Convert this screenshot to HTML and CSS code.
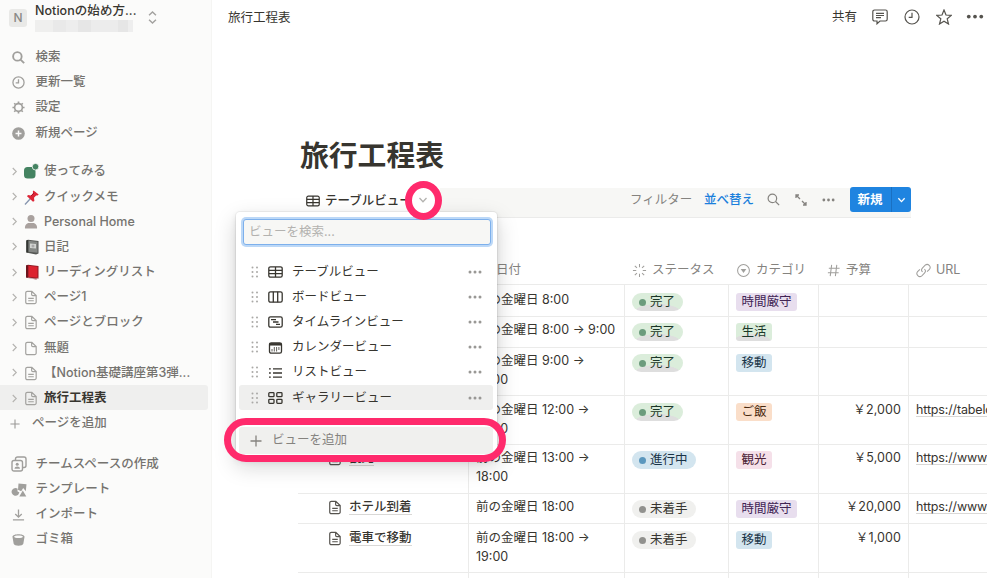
FILE: index.html
```html
<!DOCTYPE html>
<html lang="ja">
<head>
<meta charset="utf-8">
<title>旅行工程表</title>
<link rel="stylesheet" href="styles.css">
</head>
<body>
<svg class="defs" aria-hidden="true">
  <symbol id="chev" viewBox="0 0 8 10"><path d="M2 1l4 4-4 4"/></symbol>
  <symbol id="down" viewBox="0 0 10 8"><path d="M1.5 2L5 5.800L8.500 2"/></symbol>
  <symbol id="page" viewBox="0 0 13 15"><path d="M2.600.8h4.800l4.700 4.600v7a1.700 1.700 0 0 1-1.700 1.800H2.600A1.700 1.700 0 0 1 .8 12.400V2.500A1.700 1.700 0 0 1 2.600.8zM7.200 1v3.200a1.300 1.300 0 0 0 1.300 1.300H12M3.500 8.500h6M3.500 11h6"/></symbol>
  <symbol id="blank" viewBox="0 0 13 15"><path d="M2.600.8h4.800l4.700 4.600v7a1.700 1.700 0 0 1-1.700 1.800H2.600A1.700 1.700 0 0 1 .8 12.400V2.500A1.700 1.700 0 0 1 2.600.8zM7.200 1v3.200a1.300 1.300 0 0 0 1.300 1.300H12"/></symbol>
  <symbol id="search" viewBox="0 0 14 14"><circle cx="5.800" cy="5.800" r="4.600"/><path d="M9.200 9.200l3.900 3.900"/></symbol>
  <symbol id="clock" viewBox="0 0 14 14"><circle cx="7" cy="7" r="6"/><path d="M7 3.500V7.500H4"/></symbol>
  <symbol id="plus" viewBox="0 0 12 12"><path d="M6 .5v11M.5 6h11"/></symbol>
  <symbol id="dots" viewBox="0 0 14 4"><circle cx="2" cy="2" r="1.500"/><circle cx="7" cy="2" r="1.500"/><circle cx="12" cy="2" r="1.500"/></symbol>
  <symbol id="grip" viewBox="0 0 8 12"><circle cx="1.500" cy="1.500" r="1"/><circle cx="6" cy="1.500" r="1"/><circle cx="1.500" cy="6" r="1"/><circle cx="6" cy="6" r="1"/><circle cx="1.500" cy="10.500" r="1"/><circle cx="6" cy="10.500" r="1"/></symbol>
  <symbol id="table" viewBox="0 0 15 12"><path d="M2.500.8h10a1.700 1.700 0 0 1 1.700 1.700v7a1.700 1.700 0 0 1-1.700 1.700h-10A1.700 1.700 0 0 1 .8 9.500v-7A1.700 1.700 0 0 1 2.500.8zM.8 4.300h13.400M.8 7.700h13.400M7.500.8v10.400"/></symbol>
</svg>
<div class="app">
  <aside class="sidebar">
    <header class="space">
      <span class="avatar">N</span>
      <div class="space-name"><b>Notionの始め方...</b><i class="redacted"></i></div>
      <svg class="updown" viewBox="0 0 8 12"><path d="M.8 4L4 1l3.200 3M.8 8L4 11l3.200-3"/></svg>
    </header>
    <nav class="group main-nav">
      <a class="row"><svg class="ic bold"><use href="#search"/></svg>検索</a>
      <a class="row"><svg class="ic"><use href="#clock"/></svg>更新一覧</a>
      <a class="row"><svg class="ic" viewBox="0 0 14 14"><circle cx="7" cy="7" r="4.200" stroke-width="1.800"/><path stroke-width="1.800" d="M7 .5v2M7 11.500v2M.5 7h2M11.500 7h2M2.400 2.400l1.400 1.400M10.200 10.200l1.400 1.400M2.400 11.600l1.400-1.400M10.200 3.800l1.400-1.400"/></svg>設定</a>
      <a class="row"><svg class="ic" viewBox="0 0 14 14"><circle class="fill" cx="7" cy="7" r="6.800"/><path stroke="#fbfbfa" stroke-width="1.600" d="M7 3.800v6.400M3.800 7h6.400"/></svg>新規ページ</a>
    </nav>
    <nav class="group pages">
      <a class="row"><svg class="chev"><use href="#chev"/></svg><svg class="emo" viewBox="0 0 16 16"><rect x="1" y="4" width="11.500" height="11.500" rx="3.500" fill="#448361"/><circle cx="12.500" cy="3.700" r="3.300" fill="#448361" stroke="#fbfbfa" stroke-width=".8"/></svg>使ってみる</a>
      <a class="row"><svg class="chev"><use href="#chev"/></svg><svg class="emo" viewBox="0 0 16 16"><path d="M7.500 9.500L2 15.500" stroke="#8695ae" stroke-width="1.300"/><path d="M10.500 1.500l5.200 4-1.200 1-1.400-.1-2.100 2.300.4 3.300-1.400.7-6-5.400 1-1.400 3.100.5 2-2.300-.3-1.600z" fill="#dd2637"/><path d="M8 7l3-3" stroke="#a60f25" stroke-width="1"/></svg>クイックメモ</a>
      <a class="row"><svg class="chev"><use href="#chev"/></svg><svg class="emo" viewBox="0 0 16 16"><circle cx="8" cy="4.500" r="3.500" fill="#a9a19e"/><path d="M2 14.500c-.5-3 1.500-5.500 4-5.500h4c2.500 0 4.500 2.500 4 5.500z" fill="#a9a19e"/></svg>Personal Home</a>
      <a class="row"><svg class="chev"><use href="#chev"/></svg><svg class="emo" viewBox="0 0 16 16"><path d="M3 1.500l2-.8L15.500 2v12.500L13 15.500 3 13.500z" fill="#555754"/><path d="M5.500 1.800l9 1v11l-9-1z" fill="#858885"/><path d="M7 4.500l6 .5v4.500L7 9z" fill="#d2d4d1"/><circle cx="10" cy="7" r="1.500" fill="#aaa"/><path d="M4.500 1v12.500" stroke="#343633"/></svg>日記</a>
      <a class="row"><svg class="chev"><use href="#chev"/></svg><svg class="emo" viewBox="0 0 16 16"><path d="M3 1.500l2-.8L15.500 2v12.500L13 15.500 3 13.500z" fill="#8f1b24"/><path d="M5.500 1.800l9 1v11l-9-1z" fill="#dc2330"/><path d="M4 1.300v12.200" stroke="#58151b" stroke-width="1.300"/><path d="M5 14l8 1 2.500-1" stroke="#ddd" stroke-width=".7" fill="none"/></svg>リーディングリスト</a>
      <a class="row"><svg class="chev"><use href="#chev"/></svg><svg class="pg"><use href="#page"/></svg>ページ1</a>
      <a class="row"><svg class="chev"><use href="#chev"/></svg><svg class="pg"><use href="#page"/></svg>ページとブロック</a>
      <a class="row"><svg class="chev"><use href="#chev"/></svg><svg class="pg"><use href="#blank"/></svg>無題</a>
      <a class="row"><svg class="chev"><use href="#chev"/></svg><svg class="pg"><use href="#page"/></svg>【Notion基礎講座第3弾...</a>
      <a class="row current"><svg class="chev"><use href="#chev"/></svg><svg class="pg"><use href="#page"/></svg>旅行工程表</a>
      <a class="row add"><svg class="plus"><use href="#plus"/></svg>ページを追加</a>
    </nav>
    <nav class="group">
      <a class="row"><svg class="ic big" viewBox="0 0 16 16"><rect x="1" y="4.500" width="10.500" height="10.500" rx="2"/><path d="M4.500 4V3a2 2 0 0 1 2-2H13a2 2 0 0 1 2 2v6.500a2 2 0 0 1-2 2h-1"/><circle class="fill" cx="6.200" cy="8.300" r="1.500"/><path class="fill" d="M3.500 12.800c0-3 5.500-3 5.500 0z"/></svg>チームスペースの作成</a>
      <a class="row"><svg class="ic big" viewBox="0 0 16 16"><path class="fill" d="M7.500 1.500l8 .8-.7 7-2.600-3.300-2 3.200-3.200-1.500zM4.500 6a3.900 3.900 0 1 0 2.700 6.700l1.200-2.300-2-1.200.3-2.500A4 4 0 0 0 4.500 6zM11.800 8.500L15.300 14.500H8.300z"/></svg>テンプレート</a>
      <a class="row"><svg class="ic" viewBox="0 0 14 14"><path d="M7 1.500v8M3.500 6.500L7 9.800l3.500-3.300M1 12.800h12"/></svg>インポート</a>
      <a class="row"><svg class="ic" viewBox="0 0 14 14"><path class="fill" fill-rule="evenodd" d="M.5 4c0-3.700 13-3.700 13 0l-1.300 7.500c-.5 2.800-9.900 2.800-10.400 0zM2.200 4c0 1.900 9.600 1.900 9.600 0s-9.600-1.900-9.600 0z"/></svg>ゴミ箱</a>
    </nav>
  </aside>

  <main class="main">
    <header class="topbar">
      <span>旅行工程表</span>
      <div class="actions">
        <span>共有</span>
        <svg class="a-ic" viewBox="0 0 16 16"><path d="M2.500 1h11A1.700 1.700 0 0 1 15.200 2.700v7.600a1.700 1.700 0 0 1-1.700 1.700H8l-3 2.800V12H2.500A1.700 1.700 0 0 1 .8 10.300V2.700A1.700 1.700 0 0 1 2.500 1zM4 4.300h8M4 6.500h8M4 8.700h5"/></svg>
        <svg class="a-ic" viewBox="0 0 16 16"><circle cx="8" cy="8" r="7"/><path d="M8 3.700v4.600H4.700"/></svg>
        <svg class="a-ic" viewBox="0 0 16 16"><path d="M8 1l2 5 5.300.4-4.100 3.400 1.300 5.200L8 12.200 3.500 15l1.300-5.200L.7 6.400 6 6z"/></svg>
        <svg class="a-dots"><use href="#dots"/></svg>
      </div>
    </header>
    <h1>旅行工程表</h1>
    <div class="toolbar">
      <div class="view"><svg class="t-ic"><use href="#table"/></svg>テーブルビュー</div>
      <div class="tools">
        <span class="filter">フィルター</span><span class="sort">並べ替え</span>
        <svg class="s-ic"><use href="#search"/></svg>
        <svg class="x-ic" viewBox="0 0 12 12"><path d="M1 4V1h3M1 1l4 4M11 8v3H8M11 11L7 7"/></svg>
        <svg class="d-ic"><use href="#dots"/></svg>
        <button class="new"><span>新規</span><i><svg><use href="#down"/></svg></i></button>
      </div>
    </div>
    <section class="grid">
      <div class="tr head">
        <div></div><div class="date-h">日付</div>
        <div><svg viewBox="0 0 16 16"><path d="M8 1v3.500M8 11.500V15M1 8h3.500M11.500 8H15M3 3l2.300 2.300M10.700 10.700L13 13M3 13l2.300-2.300M10.700 5.300L13 3"/></svg>ステータス</div>
        <div><svg viewBox="0 0 16 16"><circle cx="8" cy="8" r="6.300"/><path class="fill" d="M5 6.300h6L8 10.600z"/></svg>カテゴリ</div>
        <div><svg viewBox="0 0 16 16"><path d="M6 2L4.500 14M11.500 2L10 14M3 5.500h11.500M2 10.500h11.500"/></svg>予算</div>
        <div><svg viewBox="0 0 16 16"><path d="M7 9.600a3.200 3.200 0 0 1 0-4.500l2.800-2.800a3.200 3.200 0 0 1 4.500 4.500l-2.500 2.500M9 6.400a3.200 3.200 0 0 1 0 4.500l-2.800 2.800a3.200 3.200 0 0 1-4.500-4.500l2.500-2.500"/></svg>URL</div>
      </div>
      <div class="tr r1"><div></div><div>前の金曜日 8:00</div><div><span class="pill done">完了</span></div><div><span class="tag purple">時間厳守</span></div><div></div><div></div></div>
      <div class="tr r2"><div></div><div>前の金曜日 8:00 → 9:00</div><div><span class="pill done">完了</span></div><div><span class="tag green">生活</span></div><div></div><div></div></div>
      <div class="tr r3"><div></div><div>前の金曜日 9:00 →<br>12:00</div><div><span class="pill done">完了</span></div><div><span class="tag blue">移動</span></div><div></div><div></div></div>
      <div class="tr r4"><div></div><div>前の金曜日 12:00 →<br>13:00</div><div><span class="pill done">完了</span></div><div><span class="tag orange">ご飯</span></div><div class="num">￥2,000</div><div><u>https://tabelo</u></div></div>
      <div class="tr r5"><div class="name"><svg><use href="#page"/></svg><b>観光</b></div><div>前の金曜日 13:00 →<br>18:00</div><div><span class="pill doing">進行中</span></div><div><span class="tag pink">観光</span></div><div class="num">￥5,000</div><div><u>https://www.</u></div></div>
      <div class="tr r6"><div class="name"><svg><use href="#page"/></svg><b>ホテル到着</b></div><div>前の金曜日 18:00</div><div><span class="pill todo">未着手</span></div><div><span class="tag purple">時間厳守</span></div><div class="num">￥20,000</div><div><u>https://www.</u></div></div>
      <div class="tr r7"><div class="name"><svg><use href="#page"/></svg><b>電車で移動</b></div><div>前の金曜日 18:00 →<br>19:00</div><div><span class="pill todo">未着手</span></div><div><span class="tag blue">移動</span></div><div class="num">￥1,000</div><div></div></div>
      <div class="tr r8"><div></div><div></div><div></div><div></div><div></div><div></div></div>
    </section>
  </main>
</div>

<div class="popover">
  <div class="field">ビューを検索...</div>
  <div class="views">
    <div class="item"><svg class="grip"><use href="#grip"/></svg><svg class="v"><use href="#table"/></svg><span>テーブルビュー</span><svg class="more"><use href="#dots"/></svg></div>
    <div class="item"><svg class="grip"><use href="#grip"/></svg><svg class="v" viewBox="0 0 15 12"><rect x=".8" y=".8" width="13.400" height="10.400" rx="1.700"/><path d="M5.300.8v10.400M9.700.8v10.400"/></svg><span>ボードビュー</span><svg class="more"><use href="#dots"/></svg></div>
    <div class="item"><svg class="grip"><use href="#grip"/></svg><svg class="v" viewBox="0 0 15 12"><rect x=".8" y=".8" width="13.400" height="10.400" rx="1.700"/><path d="M3 3.700h5M5 6h5.500M8 8.300h4"/></svg><span>タイムラインビュー</span><svg class="more"><use href="#dots"/></svg></div>
    <div class="item"><svg class="grip"><use href="#grip"/></svg><svg class="v" viewBox="0 0 15 12"><rect x="1.500" y=".8" width="12" height="10.400" rx="1.700"/><path class="cap" d="M1.500 2.300h12"/><path class="thin" d="M4 7v2.500M6.300 5v4.500M8.600 5v4.500M10.900 5v3"/></svg><span>カレンダービュー</span><svg class="more"><use href="#dots"/></svg></div>
    <div class="item"><svg class="grip"><use href="#grip"/></svg><svg class="v" viewBox="0 0 15 12"><path d="M1 1.800h1.800M1 6h1.800M1 10.200h1.800M5 1.800h9M5 6h9M5 10.200h9"/></svg><span>リストビュー</span><svg class="more"><use href="#dots"/></svg></div>
    <div class="item hover"><svg class="grip"><use href="#grip"/></svg><svg class="v" viewBox="0 0 15 12"><rect x=".8" y=".7" width="5.200" height="4" rx=".8"/><rect x="8.800" y=".7" width="5.200" height="4" rx=".8"/><rect x=".8" y="7.300" width="5.200" height="4" rx=".8"/><rect x="8.800" y="7.300" width="5.200" height="4" rx=".8"/></svg><span>ギャラリービュー</span><svg class="more"><use href="#dots"/></svg></div>
  </div>
  <div class="add-view"><svg><use href="#plus"/></svg>ビューを追加</div>
</div>
<div class="mark ring"><svg><use href="#down"/></svg></div>
<div class="mark box"></div>
</body>
</html>
```
FILE: styles.css
```css
* { box-sizing: border-box; }
body {
  margin: 0; width: 987px; height: 578px; overflow: hidden; position: relative;
  background: #fff; color: #37352f;
  font: 12.5px/19px Inter, "Noto Sans CJK JP", sans-serif;
}
.defs { position: absolute; width: 0; height: 0; }
svg { fill: none; stroke: currentColor; stroke-width: 1.3; flex: none; display: block; }
.fill { fill: currentColor; stroke: none; }
.app { display: flex; height: 578px; }

/* Sidebar */
.sidebar { width: 212px; flex: none; background: #fbfbfa; border-right: 1px solid #f5f5f3; color: #75736f; font-weight: 500; }
.space { display: flex; height: 44px; padding-left: 9px; }
.avatar { width: 18px; height: 18px; margin-top: 9px; border-radius: 3px; background: #e9e9e7; font-size: 12px; line-height: 18px; text-align: center; color: #8a8986; }
.space-name { margin-left: 8px; width: 106px; padding-top: 1px; }
.space-name b { display: block; font-weight: 500; color: #37352f; white-space: nowrap; letter-spacing: .05px; }
.redacted { display: block; width: 98px; height: 12px; background: linear-gradient(90deg, #efefee 0 18%, #e9e9e9 18% 32%, #ededed 32% 44%, #e6e6e6 44% 57%, #ececec 57% 85%, #e6e6e6 85% 95%, #eee 95%); }
.updown { width: 9px; height: 13px; margin: 11px 0 0 7px; color: #a3a29f; }
.group { margin-bottom: 13.500px; }
.pages { margin-bottom: 15.500px; }
.row { display: flex; align-items: center; height: 25.200px; padding-left: 12px; white-space: nowrap; }
.ic { width: 13px; height: 13px; margin: 2px 10.500px 0 0; color: #a09f9c; stroke-width: 1.4; }
.ic.bold { stroke-width: 2; }
.ic.big { width: 16px; height: 16px; margin: 2px 8.500px 0 -1px; }
.chev { width: 7px; height: 9px; margin: 1px 5px 0 -1px; color: #b4b3b0; }
.emo { width: 16px; height: 16px; margin: 1px 5px 0 0; stroke: none; }
.pg { width: 12px; height: 15px; margin: 2px 7px 0 2px; color: #a3a29f; }
.current { width: 208px; background: #efefee; border-radius: 0 3px 3px 0; color: #37352f; font-weight: 600; }
.plus { width: 10px; height: 10px; margin: 2px 12px 0 -2px; color: #999895; }

/* Main area */
.main { flex: 1; min-width: 0; overflow: hidden; }
.topbar { display: flex; justify-content: space-between; height: 34px; padding-left: 16px; line-height: 35px; }
.actions { display: flex; align-items: center; width: 155px; gap: 16px; height: 33px; }
.actions span { margin-right: -1px; }
.a-ic { width: 16px; height: 16px; stroke-width: 1.2; color: #55534e; }
.a-dots { width: 18px; height: 5px; margin-left: -2px; fill: #55534e; stroke: none; }
h1 { margin: 101px 0 0 88px; font-size: 28.800px; line-height: 42px; font-weight: 700; }
.toolbar { display: flex; justify-content: space-between; width: 613px; height: 30px; margin: 11px 0 0 86px; }
.view { display: flex; align-items: center; padding: 0 0 5px 8px; font-weight: 500; height: 30px; }
.t-ic { width: 14px; height: 12px; margin: 1px 5px 0 0; }
.tools { width: 471px; display: flex; height: 30px; align-items: center; padding: 0 0 6px 190px; background: #f7f7f5; border-bottom: 1px solid #ebebea; color: #85837f; white-space: nowrap; }
.filter { width: 62px; }
.sort { color: #1b7fdc; margin-left: 12px; width: 50px; font-weight: 500; }
.s-ic { width: 13px; height: 13px; margin-left: 13px; }
.x-ic { width: 12px; height: 12px; margin-left: 15px; }
.d-ic { width: 13px; height: 4px; margin-left: 15px; fill: currentColor; stroke: none; }
.new { display: flex; align-items: center; width: 61px; height: 25px; margin-left: auto; padding: 0; border: 0; border-radius: 3px; background: #1f84e0; color: #fff; font: inherit; font-weight: 600; flex: none; }
.new span { width: 41px; padding-right: 1px; }
.new i { width: 20px; height: 25px; border-left: 1px solid #1a70c2; padding: 9px 0 0 5px; }
.new svg { width: 9px; height: 8px; stroke-width: 1.5; }

/* Database table */
.grid { margin: 38px 0 0 86px; width: 720px; }
.tr { display: grid; grid-template-columns: 171px 156px 104px 90px 90px 109px; border-bottom: 1px solid #ebebea; }
.tr > div { padding: 3px 0 0 7px; border-right: 1px solid #ebebea; white-space: nowrap; }
.tr > div:last-child { border-right: 0; }
.tr.head { height: 29px; color: #85837f; }
.tr.head > div { display: flex; align-items: center; padding: 0 0 1px 7px; border: 0; }
.head svg { width: 15px; height: 15px; margin: 1px 5px 0 0; stroke-width: 1.1; color: #a09f9c; }
.tr.head > .date-h { padding-left: 27px; }
.r1 { height: 32px; }
.tr.r1 > div { padding-top: 5px; }
.r2 { height: 31px; }
.r3 { height: 48px; }
.r4, .r5, .r7 { height: 49px; }
.tr.r4 > div, .tr.r7 > div { padding-top: 4px; }
.r6 { height: 30px; }
.r8 { height: 40px; }
.pill, .tag { display: block; width: max-content; height: 18px; margin-top: 3px; line-height: 18px; }
.pill { padding: 0 8px 0 18px; border-radius: 9px; position: relative; }
.pill::before { content: ""; position: absolute; left: 7px; top: 6px; width: 7px; height: 7px; border-radius: 50%; background: currentColor; }
.pill.done { background: radial-gradient(ellipse 24px 9px at 50% 110%, #dedede 96%, #dbeddb); color: #1c3829; }
.pill.done::before { background: #6c9b7d; }
.doing { background: #d3e5ef; color: #183347; }
.pill.doing::before { background: #5b97bd; }
.todo { background: #f0f0ee; color: #37352f; }
.pill.todo::before { background: #91918e; }
.tag { padding: 0 5.500px; border-radius: 3px; }
.purple { background: #e8deee; color: #412454; }
.green { background: radial-gradient(ellipse 20px 9px at 45% 110%, #dedede 96%, #dbeddb); color: #1c3829; }
.blue { background: #d3e5ef; color: #183347; }
.orange { background: #fadec9; color: #49290e; }
.pink { background: #f5e0e9; color: #4c2337; }
.tr > div.num { text-align: right; padding-right: 7px; letter-spacing: .1px; }
u { text-decoration: none; display: inline-block; height: 17px; line-height: 19px; border-bottom: 1px solid #d9d8d6; letter-spacing: -.15px; }
.tr > .name { display: flex; padding-left: 31px; }
.name svg { width: 12px; height: 15px; margin: 3px 8px 0 0; color: #55534e; }
.name b { font-weight: 500; height: 18px; border-bottom: 1px solid #d9d8d6; }

/* View picker floating over the table */
.popover { position: absolute; left: 236px; top: 212px; width: 261px; height: 246px; padding: 7px 3px; background: #fff; border-radius: 4px; box-shadow: 0 0 0 1px rgba(15,15,15,.05), 0 3px 6px rgba(15,15,15,.1), 0 8px 22px rgba(15,15,15,.18); }
.field { width: 248px; height: 26px; margin-left: 4px; padding: 0 5px; line-height: 23px; background: #f7f7f5; border: 1px solid #7db0ec; border-radius: 3px; box-shadow: 0 0 0 2px #bcd8f7; color: #b3b2af; }
.views { margin-top: 14px; }
.item { display: flex; align-items: center; height: 25.200px; width: 254px; padding-left: 12px; border-radius: 3px; }
.grip { width: 8px; height: 12px; fill: #aaa9a6; stroke: none; }
.v { width: 15px; height: 12px; margin: 1px 9px 0 9px; }
.cap { stroke-width: 2.500; }
.thin { stroke-width: .8; }
.item span { flex: 1; padding-bottom: 1px; }
.more { width: 14px; height: 4px; margin-right: 11px; fill: #999895; stroke: none; }
.hover { background: #efefee; }
.add-view { display: flex; align-items: center; width: 254px; height: 27px; margin-top: 17px; padding: 0 0 2px 11px; background: #f0f0ee; border-radius: 3px; color: #85837f; }
.add-view svg { width: 12px; height: 12px; margin: 2px 10px 0 0; }

/* Highlight marks */
.mark { position: absolute; border: 7px solid #ff2a6c; }
.ring { left: 405px; top: 181px; width: 37px; height: 39px; border-radius: 50%; background: #fff; color: #b4b3b0; }
.ring svg { width: 10px; height: 8px; margin: 8px 0 0 6px; }
.box { left: 224px; top: 418px; width: 282px; height: 44px; border-radius: 22px; }
```
